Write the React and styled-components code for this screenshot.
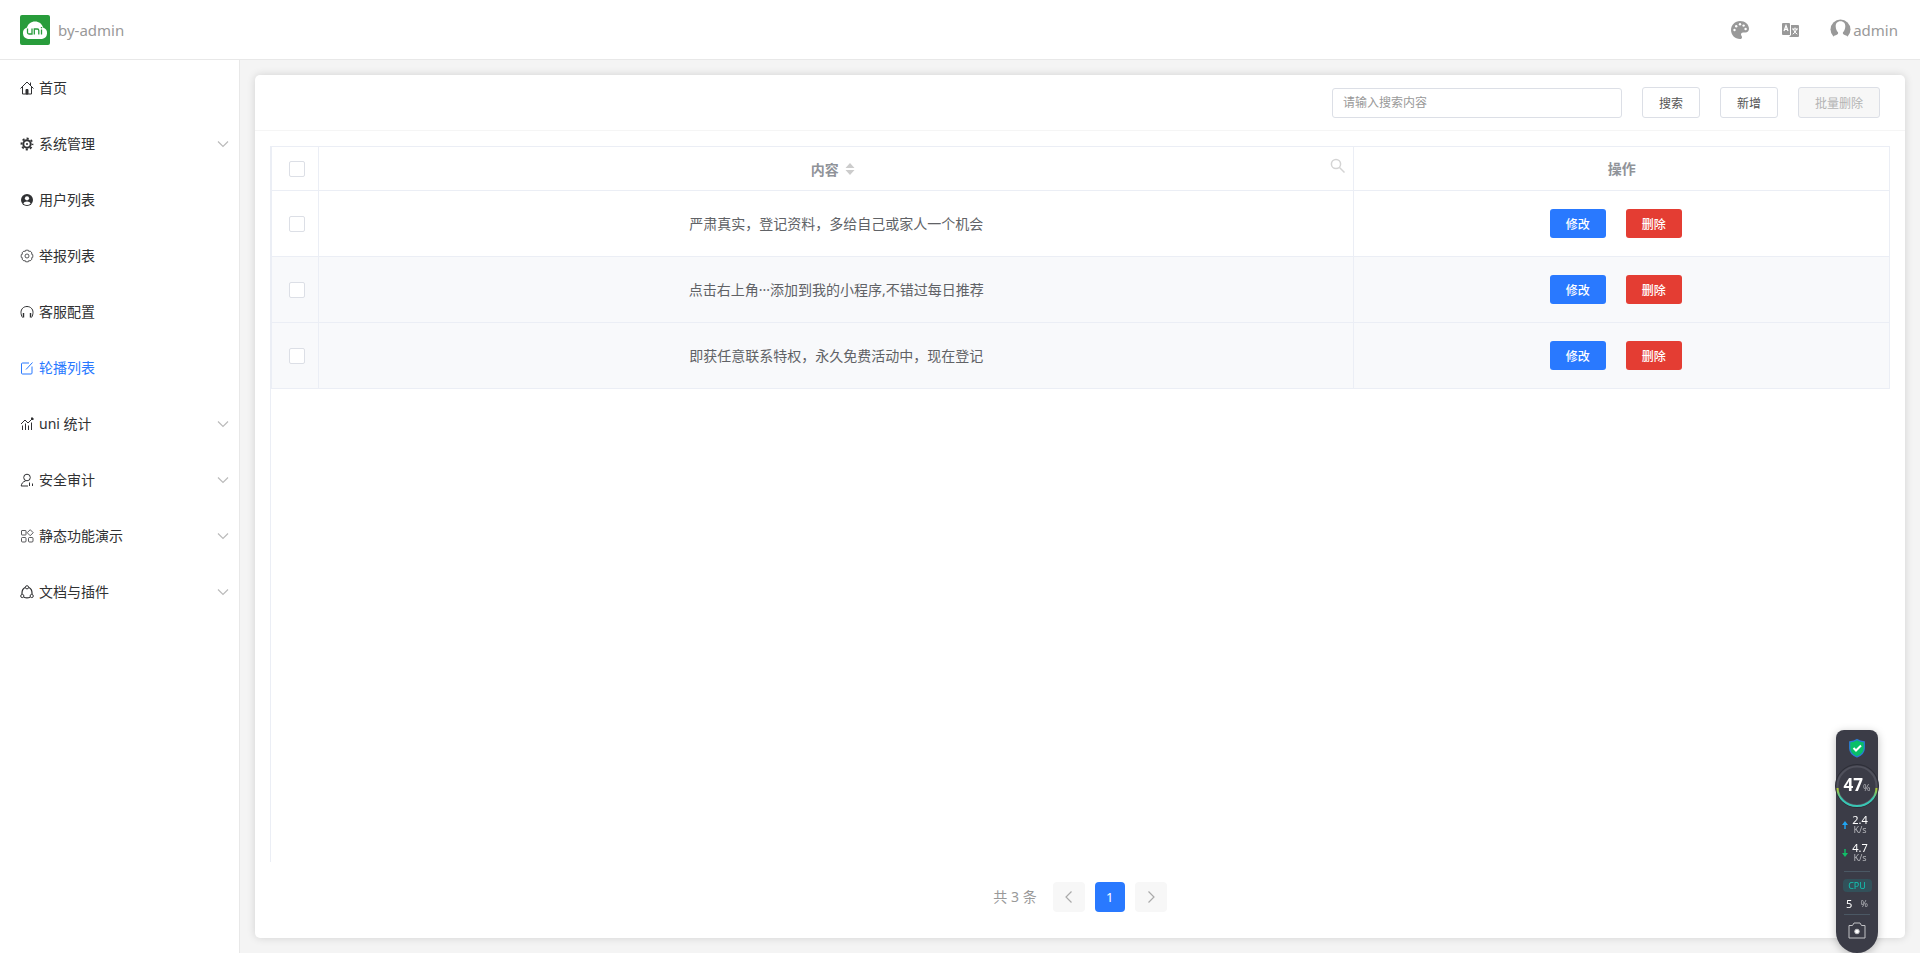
// /////////////// IMPORTS //////////////////////// //

import React, { useState } from 'react';
import styled, { createGlobalStyle } from 'styled-components';

// /////////////// GLOBAL STYLING //////////////////////// //

const GlobalStyle = createGlobalStyle`
  * {
    box-sizing: border-box;
  }

  body {
    margin: 0;
    background: #f4f4f4;
    color: #303133;
    font-family: "Noto Sans", "Noto Sans CJK SC", sans-serif;
    font-size: 14px;
    line-height: 20px;
  }

  button,
  input {
    font-family: inherit;
  }
`;

// /////////////// PAGE STYLING //////////////////////// //

const Page = styled.div`
  min-height: 100vh;
  display: flex;
  flex-direction: column;
`;

const Header = styled.header`
  height: 60px;
  padding: 0 22px 0 20px;
  display: flex;
  align-items: center;
  justify-content: space-between;
  background: #fff;
  border-bottom: 1px solid #e8e8e8;
  color: #999;
  font-size: 15px;
`;

const Brand = styled.a`
  display: flex;
  align-items: center;
  gap: 8px;
  color: inherit;
  text-decoration: none;
`;

const HeaderActions = styled.div`
  display: flex;
  align-items: center;
  gap: 30px;
`;

const HeaderButton = styled.button`
  display: flex;
  align-items: center;
  gap: 2px;
  padding: 0;
  border: 0;
  background: none;
  color: #999;
  font-size: 15px;
  cursor: pointer;
`;

const Body = styled.div`
  flex: 1;
  display: flex;
`;

const Sidebar = styled.nav`
  width: 240px;
  flex-shrink: 0;
  background: #fff;
  border-right: 1px solid #e8e8e8;
`;

const MenuList = styled.ul`
  margin: 0;
  padding: 0;
  list-style: none;
`;

const MenuLink = styled.a`
  height: 56px;
  padding: 0 9px 0 20px;
  display: flex;
  align-items: center;
  gap: 5px;
  color: ${(props) => (props.$active ? '#2979ff' : '#303133')};
  text-decoration: none;

  & > svg:last-child:not(:first-child) {
    margin-left: auto;
    color: #bbb;
  }
`;

const Main = styled.main`
  flex: 1;
  min-width: 0;
  padding: 15px;
  display: flex;
`;

const Card = styled.section`
  flex: 1;
  min-width: 0;
  display: flex;
  flex-direction: column;
  background: #fff;
  border-radius: 5px;
  box-shadow: 0 0 8px rgba(0, 0, 0, 0.14);
`;

const Toolbar = styled.form`
  min-height: 56px;
  padding: 0 25px;
  display: flex;
  align-items: center;
  justify-content: flex-end;
  gap: 20px;
  border-bottom: 1px solid #f5f5f5;
`;

const SearchInput = styled.input`
  width: 290px;
  height: 30px;
  padding: 0 10px;
  border: 1px solid #dcdfe6;
  border-radius: 3px;
  font-size: 12px;
  outline: none;

  &::placeholder {
    color: #999;
  }
`;

const ToolButton = styled.button`
  height: 31px;
  padding: 0 16px;
  border: 1px solid #dcdfe6;
  border-radius: 3px;
  background: #fff;
  color: #555;
  font-size: 12px;

  &:disabled {
    background: #f7f7f7;
    color: #b4b4b4;
  }
`;

// /////////////// TABLE STYLING //////////////////////// //

const TableArea = styled.div`
  flex: 1;
  margin: 15px 15px 0;
  border-left: 1px solid #ebeef5;
`;

const Table = styled.table`
  width: 100%;
  table-layout: fixed;
  border-spacing: 0;
  border-top: 1px solid #ebeef5;
  border-left: 1px solid #ebeef5;
  color: #606266;
  text-align: center;
`;

const HeadCell = styled.th`
  width: ${(props) => props.$width || 'auto'};
  height: 44px;
  padding: 0 8px;
  border-right: 1px solid #ebeef5;
  border-bottom: 1px solid #ebeef5;
  color: #909399;
  font-weight: 700;
`;

const HeadContent = styled.div`
  display: flex;
  align-items: center;
`;

const SortButton = styled.button`
  flex: 1;
  display: flex;
  align-items: center;
  justify-content: center;
  gap: 6px;
  padding: 0 0 0 8px;
  border: 0;
  background: none;
  color: inherit;
  font-size: 14px;
  font-weight: 700;
`;

const FilterButton = styled.button`
  display: flex;
  padding: 0 0 6px;
  border: 0;
  background: none;
  color: #d4d4d4;
`;

const Row = styled.tr`
  background: ${(props) => (props.$shaded ? '#f8f9fb' : '#fff')};
`;

const Cell = styled.td`
  height: 66px;
  padding: 0 8px;
  border-right: 1px solid #ebeef5;
  border-bottom: 1px solid #ebeef5;
`;

const Checkbox = styled.input.attrs({ type: 'checkbox' })`
  appearance: none;
  width: 16px;
  height: 16px;
  margin: 0 0 2px 4px;
  display: inline-block;
  vertical-align: middle;
  border: 1px solid #dcdfe6;
  border-radius: 2px;
  background: #fff;

  &:checked {
    background: #2979ff;
  }
`;

const RowActions = styled.div`
  padding-right: 12px;
  display: flex;
  justify-content: center;
  gap: 20px;
`;

const RowButton = styled.button`
  height: 29px;
  padding: 0 16px;
  border: 0;
  border-radius: 3px;
  background: ${(props) => (props.$danger ? '#e43d33' : '#2979ff')};
  color: #fff;
  font-size: 12px;
  font-weight: 500;
`;

// /////////////// PAGINATION STYLING //////////////////////// //

const Pagination = styled.div`
  padding: 20px 0 26px;
  display: flex;
  align-items: center;
  justify-content: center;
  gap: 10px;
  color: #999;
`;

const Total = styled.span`
  margin-right: 6px;
`;

const PageButton = styled.button`
  min-width: ${(props) => (props.$current ? '30px' : '32px')};
  height: 30px;
  padding: 0;
  display: flex;
  align-items: center;
  justify-content: center;
  border: 0;
  border-radius: 4px;
  background: ${(props) => (props.$current ? '#2979ff' : '#f7f7f7')};
  color: ${(props) => (props.$current ? '#fff' : '#aaa')};
  font-size: 13px;
`;

// /////////////// MONITOR STYLING //////////////////////// //

const Monitor = styled.aside`
  position: fixed;
  right: 42px;
  bottom: 0;
  width: 42px;
  height: 223px;
  padding-top: 8px;
  display: flex;
  flex-direction: column;
  align-items: center;
  border-radius: 8px 8px 21px 21px;
  background: #3b3c47;
  box-shadow: 0 2px 8px rgba(0, 0, 0, 0.25);
  color: #fff;
  font-size: 11px;
  line-height: 10px;
`;

const Gauge = styled.div`
  position: relative;
  width: 44px;
  height: 44px;
  margin: 6px 0 7px;
  flex-shrink: 0;
  display: flex;
  align-items: center;
  justify-content: center;

  svg {
    position: absolute;
    inset: 0;
  }
`;

const GaugeReading = styled.div`
  position: relative;
  display: flex;
  align-items: baseline;
`;

const GaugeValue = styled.strong`
  font-size: 17px;
`;

const Unit = styled.span`
  color: #b4b5ba;
  font-size: 9px;
`;

const Speed = styled.div`
  height: 20px;
  margin-bottom: 8px;
  padding-right: 4px;
  display: flex;
  align-items: center;
  gap: 4px;
`;

const SpeedText = styled.div`
  display: flex;
  flex-direction: column;
  align-items: center;
`;

const Rule = styled.hr`
  width: 26px;
  margin: 0;
  border: 0;
  border-top: 1px solid #4b5864;
`;

const CpuTag = styled.span`
  width: 29px;
  margin: 7px 0;
  border-radius: 4px;
  background: #32515a;
  color: #12c4b2;
  font-size: 9px;
  line-height: 13px;
  text-align: center;
`;

const CpuValue = styled.div`
  margin: 0 0 5px;
  display: flex;
  align-items: center;
  gap: 8px;
`;

const CameraButton = styled.button`
  display: flex;
  margin-top: 7px;
  padding: 0;
  border: 0;
  background: none;
`;

// /////////////// ICONS //////////////////////// //

const Logo = () => (
  <svg width="30" height="30" viewBox="0 0 30 30">
    <rect width="30" height="30" rx="2" fill="#289c3b" />
    <path d="M8 24a6 6 0 0 1-1-11.600C8 9 11 6.500 15 6.500c4 0 7 2.300 8 5.900A6 6 0 0 1 22 24z" fill="#fff" />
    <path d="M7.500 13.500v4q0 1.500 1.500 1.500h3v-5.500M14.300 19.500v-5.500h3q1.500 0 1.500 1.500v4M21.500 14.500v5M21.500 12v1.300" fill="none" stroke="#289c3b" strokeWidth="1.300" />
  </svg>
);

const PaletteIcon = () => (
  <svg width="20" height="20" viewBox="0 0 20 20" fill="#999">
    <path d="M10 1C5 1 1 5 1 10s4 9 9 9c1.400 0 2-.8 2-1.800 0-1.200-1-1.500-1-2.700 0-1.100.9-1.900 2-1.900h2.300c2.200 0 3.700-1.700 3.700-3.900C19 4.400 15 1 10 1z" />
    <g fill="#fff">
      <circle cx="4.500" cy="10" r="1.200" />
      <circle cx="6.200" cy="6.200" r="1.200" />
      <circle cx="10" cy="4.300" r="1.200" />
      <circle cx="13.600" cy="5.600" r="1.200" />
      <circle cx="15.600" cy="9" r="1.200" />
    </g>
  </svg>
);

const LanguageIcon = () => (
  <svg width="20" height="20" viewBox="0 0 20 20">
    <path d="M2 3h7a1 1 0 0 1 1 1v11H3a1 1 0 0 1-1-1V4a1 1 0 0 1 1-1z" fill="#999" />
    <path d="M11 5h7a1 1 0 0 1 1 1v10a1 1 0 0 1-1 1H9l2-2z" fill="#999" />
    <path d="M4 11l2-5.500L8 11M4.600 9.300h2.800" fill="none" stroke="#fff" strokeWidth="1.200" />
    <path d="M12 9h6M15 7.500V9m1.700 0q-1 3.500-4 5.200m.6-5.200q1 3.500 4 5.200" fill="none" stroke="#fff" />
  </svg>
);

const AvatarIcon = () => (
  <svg width="21" height="21" viewBox="0 0 21 21">
    <circle cx="10.500" cy="10.500" r="10" fill="#999" />
    <path d="M10.500 2.200c3.300 0 5 2.300 4.800 5.400-.1 2.500-1 4.500-2.300 5.700-.4 1.200 0 1.900 1.200 2.400 1.400.6 2.700 1 3.500 1.900L15 21H6l-2.700-3.400c.8-.9 2.100-1.300 3.500-1.900 1.200-.5 1.600-1.200 1.200-2.400-1.300-1.200-2.200-3.200-2.300-5.700-.2-3.100 1.500-5.400 4.800-5.400z" fill="#fff" />
  </svg>
);

const Chevron = ({ d = 'M2 4.500l5 5 5-5', size = 14 }) => (
  <svg width={size} height={size} viewBox="0 0 14 14" fill="none" stroke="currentColor" strokeWidth="1.200">
    <path d={d} />
  </svg>
);

const MenuIcon = ({ children }) => (
  <svg width="14" height="14" viewBox="0 0 14 14" fill="none" stroke="currentColor">
    {children}
  </svg>
);

const HomeIcon = () => (
  <MenuIcon>
    <path d="M.5 7.500L7 1l6.500 6.500M2.500 6v7h9V6M10.500 1.500v3" />
    <path d="M6 13V8.500h2V13z" fill="currentColor" />
  </MenuIcon>
);

const GearIcon = () => (
  <MenuIcon>
    <circle cx="7" cy="7" r="3.700" strokeWidth="2" />
    <circle cx="7" cy="7" r="5.500" strokeWidth="1.800" strokeDasharray="2.160 2.160" strokeDashoffset="1.080" />
    <circle cx="7" cy="7" r="1" fill="currentColor" stroke="none" />
  </MenuIcon>
);

const UserIcon = () => (
  <MenuIcon>
    <circle cx="7" cy="7" r="6" fill="currentColor" stroke="none" />
    <circle cx="7" cy="5.300" r="2.100" fill="#fff" stroke="none" />
    <path d="M3.300 10.500q.5-2 3.700-2t3.700 2q-1.500 1.500-3.700 1.500t-3.700-1.500z" fill="#fff" stroke="none" />
  </MenuIcon>
);

const SettingsIcon = () => (
  <MenuIcon>
    <path d="M5.700 1.200h2.600l.5 1.300 1.300-.5 1.900 1.900-.5 1.300 1.300.5v2.600l-1.300.5.5 1.300-1.900 1.900-1.300-.5-.5 1.300H5.700l-.5-1.300-1.300.5L2 10.100l.5-1.300-1.300-.5V5.700l1.300-.5L2 3.900 3.900 2l1.300.5z" strokeWidth=".8" />
    <circle cx="7" cy="7" r="2" strokeWidth=".8" />
  </MenuIcon>
);

const HeadsetIcon = () => (
  <MenuIcon>
    <path d="M2.500 12.500C1.500 11 1 9 1 7.300 1 4 3.500 1.500 7 1.500S13 4 13 7.300c0 1.700-.5 3.700-1.500 5.200" />
    <path d="M3.500 8v4.500M10.500 8v4.500" strokeWidth="1.400" />
  </MenuIcon>
);

const EditIcon = () => (
  <MenuIcon>
    <path d="M9 2H2.500A1 1 0 0 0 1.500 3v9a1 1 0 0 0 1 1H11a1 1 0 0 0 1-1V5.500M6 8.500L12.500 1.500" />
  </MenuIcon>
);

const StatsIcon = () => (
  <MenuIcon>
    <path d="M1 7l4-4 3 3 4-4M2.500 8.500V13M5.500 6.500V13M8.500 8.500V13M11.500 5.500V13" />
    <path d="M11 1h2v2z" fill="currentColor" />
  </MenuIcon>
);

const AuditIcon = () => (
  <MenuIcon>
    <circle cx="7" cy="4.500" r="3.300" />
    <path d="M5.500 8C3 8.500 1.500 10.500 1.200 13H8M9.500 9.500V13M12.500 10.500V13" />
  </MenuIcon>
);

const AppsIcon = () => (
  <MenuIcon>
    <g strokeWidth=".8">
      <rect x="1.500" y="1.500" width="4.500" height="4.500" rx=".5" />
      <path d="M10.200.7l3 3-3 3-3-3z" />
      <rect x="1.500" y="8.500" width="4.500" height="4.500" rx="1" />
      <rect x="8.500" y="8.500" width="4.500" height="4.500" rx="1" />
    </g>
  </MenuIcon>
);

const PluginIcon = () => (
  <MenuIcon>
    <path d="M5.200 2.500C3 3.500 1.800 6 2 9M8.800 2.500c2.200 1 3.400 3.500 3.200 6.500M4 12.300q3 1.200 6 0" strokeWidth="1.200" />
    <circle cx="7" cy="2.300" r="1.600" />
    <circle cx="2.300" cy="11" r="1.600" />
    <circle cx="11.700" cy="11" r="1.600" />
  </MenuIcon>
);

const SortIcon = () => (
  <svg width="10" height="14" viewBox="0 0 10 14" fill="#ccc">
    <path d="M5 1l4.500 5h-9zM5 13L.5 8h9z" />
  </svg>
);

const SearchIcon = () => (
  <svg width="15" height="15" viewBox="0 0 15 15" fill="none" stroke="currentColor" strokeWidth="1.500">
    <circle cx="6" cy="6" r="4.600" />
    <path d="M9.500 9.500L14.500 14.500" />
  </svg>
);

const ShieldIcon = () => (
  <svg width="18" height="20" viewBox="0 0 18 20">
    <path d="M9 1.500Q12 3.500 16.300 3.800v6.400c0 4-2.800 6.800-7.300 8.800-4.500-2-7.300-4.800-7.300-8.800V3.800Q6 3.500 9 1.500z" fill="#09bf68" stroke="#2c7ad6" strokeWidth="1.200" />
    <path d="M5.500 10l2.500 2.500L13 7.500" fill="none" stroke="#fff" strokeWidth="2" />
  </svg>
);

const GaugeRing = () => (
  <svg width="44" height="44" viewBox="0 0 44 44" fill="none">
    <defs>
      <linearGradient id="ring" x1="0" y1="0" x2="0" y2="1">
        <stop offset="0" stopColor="#b9cb2c" />
        <stop offset=".6" stopColor="#39c6b4" />
      </linearGradient>
    </defs>
    <circle cx="22" cy="22" r="21.500" fill="#3b3c47" stroke="#2d2e37" />
    <circle cx="22" cy="22" r="19.500" stroke="#50515c" strokeWidth="2" />
    <path d="M2.500 24a19.500 18 0 0 0 39 0" stroke="url(#ring)" strokeWidth="2" />
  </svg>
);

const ArrowIcon = ({ down }) => (
  <svg width="6" height="8" viewBox="0 0 6 8" fill={down ? '#11bf68' : '#21a5f3'}>
    <path d={down ? 'M2.300 0h1.400v4H6L3 8 0 4h2.300z' : 'M3 0l3 4H3.700v4H2.300V4H0z'} />
  </svg>
);

const CameraIcon = () => (
  <svg width="18" height="17" viewBox="0 0 18 17" fill="none" stroke="#c2c2c6">
    <path d="M1 3.500h3.500L6 1h6l1.500 2.500H17V16H1z" />
    <circle cx="9" cy="9.500" r="2.300" fill="#fff" />
  </svg>
);

// /////////////// DATA //////////////////////// //

const menu = [
  { label: '首页', Icon: HomeIcon },
  { label: '系统管理', Icon: GearIcon, group: true },
  { label: '用户列表', Icon: UserIcon },
  { label: '举报列表', Icon: SettingsIcon },
  { label: '客服配置', Icon: HeadsetIcon },
  { label: '轮播列表', Icon: EditIcon, active: true },
  { label: 'uni 统计', Icon: StatsIcon, group: true },
  { label: '安全审计', Icon: AuditIcon, group: true },
  { label: '静态功能演示', Icon: AppsIcon, group: true },
  { label: '文档与插件', Icon: PluginIcon, group: true },
];

const rows = [
  '严肃真实，登记资料，多给自己或家人一个机会',
  '点击右上角···添加到我的小程序,不错过每日推荐',
  '即获任意联系特权，永久免费活动中，现在登记',
];

// /////////////// COMPONENTS //////////////////////// //

const SystemMonitor = () => (
  <Monitor>
    <ShieldIcon />
    <Gauge>
      <GaugeRing />
      <GaugeReading>
        <GaugeValue>47</GaugeValue>
        <Unit>%</Unit>
      </GaugeReading>
    </Gauge>
    <Speed>
      <ArrowIcon />
      <SpeedText>
        <span>2.4</span>
        <Unit>K/s</Unit>
      </SpeedText>
    </Speed>
    <Speed>
      <ArrowIcon down />
      <SpeedText>
        <span>4.7</span>
        <Unit>K/s</Unit>
      </SpeedText>
    </Speed>
    <Rule />
    <CpuTag>CPU</CpuTag>
    <CpuValue>
      <span>5</span>
      <Unit>%</Unit>
    </CpuValue>
    <Rule />
    <CameraButton aria-label="camera">
      <CameraIcon />
    </CameraButton>
  </Monitor>
);

const App = () => {
  const [query, setQuery] = useState('');

  return (
    <Page>
      <GlobalStyle />
      <Header>
        <Brand href="#home">
          <Logo />
          by-admin
        </Brand>
        <HeaderActions>
          <HeaderButton aria-label="theme"><PaletteIcon /></HeaderButton>
          <HeaderButton aria-label="language"><LanguageIcon /></HeaderButton>
          <HeaderButton>
            <AvatarIcon />
            admin
          </HeaderButton>
        </HeaderActions>
      </Header>
      <Body>
        <Sidebar>
          <MenuList>
            {menu.map(({ label, Icon, group, active }) => (
              <li key={label}>
                <MenuLink href="#menu" $active={active}>
                  <Icon />
                  {label}
                  {group && <Chevron />}
                </MenuLink>
              </li>
            ))}
          </MenuList>
        </Sidebar>
        <Main>
          <Card>
            <Toolbar onSubmit={(event) => event.preventDefault()}>
              <SearchInput
                aria-label="请输入搜索内容"
                placeholder="请输入搜索内容"
                value={query}
                onChange={(event) => setQuery(event.target.value)}
              />
              <ToolButton type="submit">搜索</ToolButton>
              <ToolButton type="button">新增</ToolButton>
              <ToolButton type="button" disabled>批量删除</ToolButton>
            </Toolbar>
            <TableArea>
              <Table>
                <thead>
                  <tr>
                    <HeadCell $width="47px"><Checkbox aria-label="全选" /></HeadCell>
                    <HeadCell>
                      <HeadContent>
                        <SortButton>
                          内容
                          <SortIcon />
                        </SortButton>
                        <FilterButton aria-label="search"><SearchIcon /></FilterButton>
                      </HeadContent>
                    </HeadCell>
                    <HeadCell $width="33.100%">操作</HeadCell>
                  </tr>
                </thead>
                <tbody>
                  {rows.map((text, index) => (
                    <Row key={text} $shaded={index > 0}>
                      <Cell><Checkbox aria-label={text} /></Cell>
                      <Cell>{text}</Cell>
                      <Cell>
                        <RowActions>
                          <RowButton>修改</RowButton>
                          <RowButton $danger>删除</RowButton>
                        </RowActions>
                      </Cell>
                    </Row>
                  ))}
                </tbody>
              </Table>
            </TableArea>
            <Pagination>
              <Total>共 3 条</Total>
              <PageButton disabled aria-label="previous">
                <Chevron d="M9.500 1.500L4 7l5.500 5.500" />
              </PageButton>
              <PageButton $current>1</PageButton>
              <PageButton disabled aria-label="next">
                <Chevron d="M4.500 1.500L10 7l-5.500 5.500" />
              </PageButton>
            </Pagination>
          </Card>
        </Main>
      </Body>
      <SystemMonitor />
    </Page>
  );
};

export default App;
